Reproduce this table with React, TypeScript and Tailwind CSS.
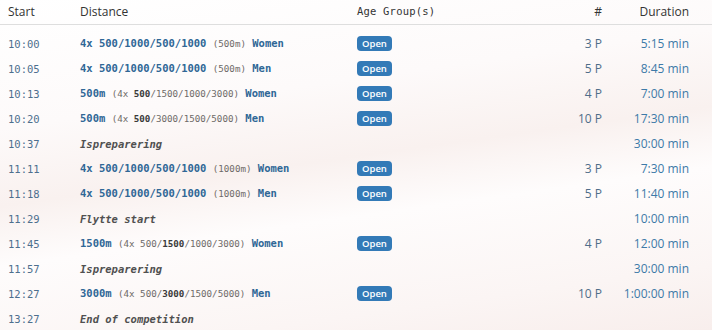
import React from 'react';

type Leg = { main: string; detail?: React.ReactNode; gender: string; count: string };

interface Row {
  start: string;
  duration: string;
  race?: Leg;
  note?: string;
}

const mono = "font-['DejaVu_Sans_Mono','Liberation_Mono',monospace]";
const sans = "font-['Open_Sans','Noto_Sans',sans-serif]";

// the active leg of a combination is printed in bold
const combo = (legs: string[], active: number) => (
  <>
    (4x{' '}
    {legs.map((l, i) => (
      <React.Fragment key={i}>
        {i > 0 && '/'}
        {i === active ? <b className="font-bold text-[#3a3a3a]">{l}</b> : l}
      </React.Fragment>
    ))}
    )
  </>
);

const ROWS: Row[] = [
  { start: '10:00', duration: '5:15 min', race: { main: '4x 500/1000/500/1000', detail: '(500m)', gender: 'Women', count: '3 P' } },
  { start: '10:05', duration: '8:45 min', race: { main: '4x 500/1000/500/1000', detail: '(500m)', gender: 'Men', count: '5 P' } },
  { start: '10:13', duration: '7:00 min', race: { main: '500m', detail: combo(['500', '1500', '1000', '3000'], 0), gender: 'Women', count: '4 P' } },
  { start: '10:20', duration: '17:30 min', race: { main: '500m', detail: combo(['500', '3000', '1500', '5000'], 0), gender: 'Men', count: '10 P' } },
  { start: '10:37', duration: '30:00 min', note: 'Ispreparering' },
  { start: '11:11', duration: '7:30 min', race: { main: '4x 500/1000/500/1000', detail: '(1000m)', gender: 'Women', count: '3 P' } },
  { start: '11:18', duration: '11:40 min', race: { main: '4x 500/1000/500/1000', detail: '(1000m)', gender: 'Men', count: '5 P' } },
  { start: '11:29', duration: '10:00 min', note: 'Flytte start' },
  { start: '11:45', duration: '12:00 min', race: { main: '1500m', detail: combo(['500', '1500', '1000', '3000'], 1), gender: 'Women', count: '4 P' } },
  { start: '11:57', duration: '30:00 min', note: 'Ispreparering' },
  { start: '12:27', duration: '1:00:00 min', race: { main: '3000m', detail: combo(['500', '3000', '1500', '5000'], 1), gender: 'Men', count: '10 P' } },
  { start: '13:27', duration: '', note: 'End of competition' },
];

const grid = 'grid grid-cols-[72px_277px_1fr_60px_87px] pl-[8px] pr-[23px] items-center';

const App: React.FC = () => {
  return (
    <div className="w-[712px] h-[330px] overflow-hidden bg-[linear-gradient(172deg,#ffffff_0%,#fdfafa_30%,#f9f1ef_48%,#fefcfc_62%,#fbf5f4_85%,#f8eeec_100%)]">
      {/* header */}
      <div className={`${grid} h-[25px] border-b border-[#dedede] text-[12px] text-[#333] ${sans}`}>
        <div>Start</div>
        <div>Distance</div>
        <div className={`${mono} text-[10.5px] tracking-[0.2px]`}>Age Group(s)</div>
        <div className="text-right">#</div>
        <div className="text-right">Duration</div>
      </div>

      <div className="pt-[6px]">
        {ROWS.map((row, i) => (
          <div key={i} className={`${grid} h-[25px] leading-[16px]`}>
            <div className={`${mono} text-[10.5px] text-[#4d6f8e]`}>{row.start}</div>
            <div className={`${mono} text-[10.5px] whitespace-nowrap`}>
              {row.race ? (
                <>
                  <span className="font-bold text-[#2f6796]">{row.race.main}</span>{' '}
                  <span className="text-[9.2px] text-[#6e6a68]">{row.race.detail}</span>{' '}
                  <span className="font-bold text-[#2f6796]">{row.race.gender}</span>
                </>
              ) : (
                <span className="font-bold italic text-[#505050]">{row.note}</span>
              )}
            </div>
            <div className="flex items-center h-[16px]">
              {row.race && (
                <span className={`inline-flex items-center h-[15px] px-[5px] rounded-[4px] bg-[#337ab7] text-white text-[9.5px] leading-none font-semibold ${sans}`}>
                  Open
                </span>
              )}
            </div>
            <div className={`text-right text-[12px] text-[#4f6d89] ${sans}`}>{row.race?.count}</div>
            <div className={`text-right text-[12px] text-[#3d7aa8] ${sans}`}>{row.duration}</div>
          </div>
        ))}
      </div>
    </div>
  );
};

export default App;
